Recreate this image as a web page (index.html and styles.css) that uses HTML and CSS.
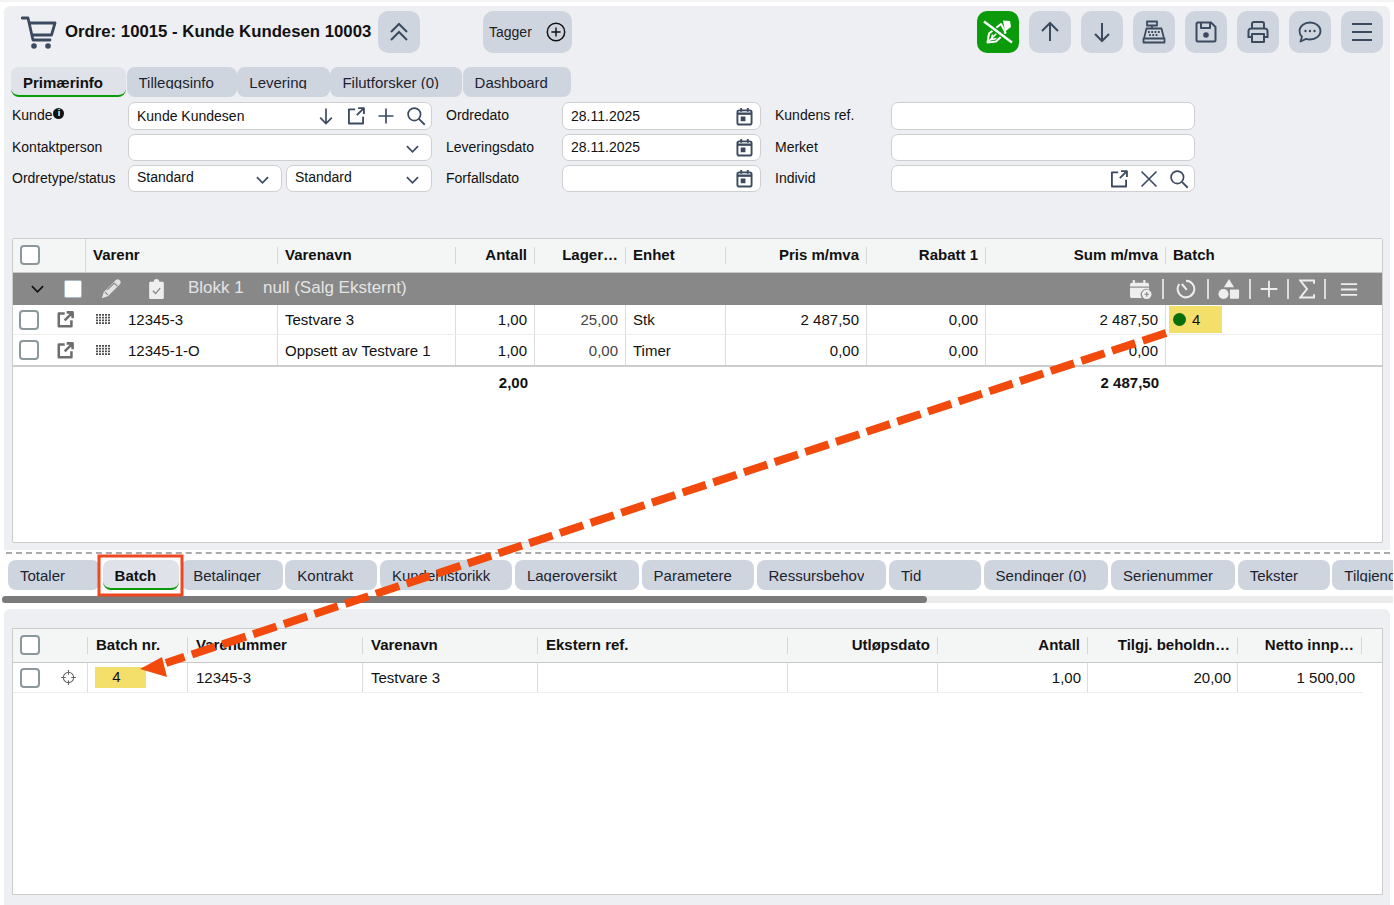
FILE: index.html
```html
<!DOCTYPE html>
<html lang="no">
<head>
<meta charset="utf-8">
<title>Ordre 10015</title>
<link rel="stylesheet" href="styles.css">
</head>
<body>
<svg class="sprite" width="0" height="0" aria-hidden="true">
  <symbol id="i-open" viewBox="0 0 24 24"><path d="M11 4H3.500v17h17v-8M13 11 21.500 2.500M14.500 2.500h7v7" fill="none" stroke="currentColor" stroke-width="2.200" stroke-linejoin="round"/></symbol>
  <symbol id="i-open-bold" viewBox="0 0 24 24"><path d="M11 4.500H3.500v16h16V13M11 13 20.500 3.500M13.500 3h7.500v7.500" fill="none" stroke="currentColor" stroke-width="3.200" stroke-linejoin="round"/></symbol>
  <symbol id="i-search" viewBox="0 0 24 24"><circle cx="10" cy="10" r="7.500" fill="none" stroke="currentColor" stroke-width="2"/><path d="m15.500 15.500 7 7" stroke="currentColor" stroke-width="2.200"/></symbol>
  <symbol id="i-plus" viewBox="0 0 24 24"><path d="M12 3v18M3 12h18" stroke="currentColor" stroke-width="2"/></symbol>
  <symbol id="i-x" viewBox="0 0 24 24"><path d="m3 3 18 18M21 3 3 21" stroke="currentColor" stroke-width="2"/></symbol>
  <symbol id="i-down" viewBox="0 0 24 24"><path d="M12 3v18M5 14l7 7 7-7" fill="none" stroke="currentColor" stroke-width="2"/></symbol>
  <symbol id="i-up" viewBox="0 0 24 24"><path d="M12 21V3M4 11l8-8 8 8" fill="none" stroke="currentColor" stroke-width="2"/></symbol>
  <symbol id="i-chev" viewBox="0 0 14 8"><path d="m1 1 6 6 6-6" fill="none" stroke="currentColor" stroke-width="1.800"/></symbol>
  <symbol id="i-cal" viewBox="0 0 18 20"><rect x="1.500" y="3.500" width="15" height="15" rx="2" fill="none" stroke="currentColor" stroke-width="2"/><path d="M1.500 7h15" stroke="currentColor" stroke-width="2.500"/><path d="M5.500 1v4M12.500 1v4" stroke="currentColor" stroke-width="2"/><rect x="5" y="10" width="5" height="5" fill="currentColor"/></symbol>
  <symbol id="i-dots" viewBox="0 0 14 11"><path d="M1 0v11M4 0v11M7 0v11M10 0v11M13 0v11" stroke="#222" stroke-width="1.600" stroke-dasharray="1.800 .95"/></symbol>
</svg>

<main class="order-panel">
  <header class="order-head">
    <svg class="cart" viewBox="0 0 36 34" width="36" height="34"><path d="M1 2h6l5 22h17M9 7h25l-3.500 12H11" fill="none" stroke="#3b4a5f" stroke-width="2.800" stroke-linejoin="round" stroke-linecap="round"/><circle cx="13" cy="30" r="2.800" fill="#3b4a5f"/><circle cx="27" cy="30" r="2.800" fill="#3b4a5f"/></svg>
    <h1 class="order-title">Ordre: 10015 - Kunde Kundesen 10003</h1>
    <button class="tool collapse"><svg viewBox="0 0 24 24" width="24" height="24"><path d="m4 12 8-8 8 8M4 20l8-8 8 8" fill="none" stroke="#3b4a5f" stroke-width="2"/></svg></button>
    <button class="tags">Tagger<svg viewBox="0 0 24 24" width="22" height="22"><circle cx="12" cy="12" r="9.500" fill="none" stroke="#111" stroke-width="1.600"/><path d="M12 7v10M7 12h10" stroke="#111" stroke-width="1.600"/></svg></button>
    <div class="tools">
      <button class="tool green"><svg viewBox="0 0 42 42" width="42" height="42"><path d="M26 9.500l7 .5 1 6-6 4.500z" fill="#fff"/><path d="M24 13l4.500 8.500L19 30.500l-8.500 1 1.500-9z" fill="none" stroke="#fff" stroke-width="2" stroke-linejoin="round"/><path d="M12 30l8-8M15.500 23.500l-1 5 5-1" fill="none" stroke="#fff" stroke-width="1.500"/><path d="M7 10.500 35 31.500" stroke="#0a9a0a" stroke-width="5"/><path d="M7 10.500 35 31.500" stroke="#fff" stroke-width="2.400"/></svg></button>
      <button class="tool"><svg class="ic" width="24" height="24"><use href="#i-up"/></svg></button>
      <button class="tool"><svg class="ic" width="24" height="24"><use href="#i-down"/></svg></button>
      <button class="tool"><svg class="ic" viewBox="0 0 24 24" width="24" height="24"><path d="M5 1.500h10v4H5zM10 5.500v3M4.500 8.500h15l2.500 10H2zM1.500 18.500h21v4h-21z" fill="none" stroke="currentColor" stroke-width="1.800" stroke-linejoin="round"/><path d="M6 12h12M7 15h10" stroke="currentColor" stroke-width="1.800" stroke-dasharray="1.800 1.500"/></svg></button>
      <button class="tool"><svg class="ic" viewBox="0 0 24 24" width="24" height="24"><path d="M4 2.500h13l4.500 4.500v13a1.500 1.500 0 0 1-1.500 1.500H4A1.500 1.500 0 0 1 2.500 20V4A1.500 1.500 0 0 1 4 2.500zM7 2.500v5.500h9V2.500" fill="none" stroke="currentColor" stroke-width="2" stroke-linejoin="round"/><circle cx="12" cy="15" r="2.800" fill="currentColor"/></svg></button>
      <button class="tool"><svg class="ic" viewBox="0 0 24 24" width="24" height="24"><path d="M6 9V4a2 2 0 0 1 2-2h8a2 2 0 0 1 2 2v5M6 17H2.500v-6A2.500 2.500 0 0 1 5 8.500h14a2.500 2.500 0 0 1 2.500 2.500v6H18" fill="none" stroke="currentColor" stroke-width="2"/><path d="M6 14h12v8H6z" fill="none" stroke="currentColor" stroke-width="2" stroke-linejoin="round"/></svg></button>
      <button class="tool"><svg class="ic" viewBox="0 0 24 24" width="24" height="24"><path d="M12 2.500c5.800 0 10.500 3.700 10.500 8.500S17.800 19.500 12 19.500c-1.400 0-2.700-.2-3.900-.6L2.500 21.500l1.500-4.700C2.200 15.300 1.500 13.300 1.500 11c0-4.800 4.700-8.500 10.500-8.500z" fill="none" stroke="currentColor" stroke-width="1.800" stroke-linejoin="round"/><circle cx="7.500" cy="11" r="1.200" fill="currentColor"/><circle cx="12" cy="11" r="1.200" fill="currentColor"/><circle cx="16.500" cy="11" r="1.200" fill="currentColor"/></svg></button>
      <button class="tool"><svg class="ic" viewBox="0 0 24 24" width="24" height="24"><path d="M2 4h20M2 12h20M2 20h20" stroke="currentColor" stroke-width="2.200"/></svg></button>
    </div>
  </header>

  <nav class="tabs top-tabs">
    <span class="tab active"><span class="tab-label">Primærinfo</span></span>
    <span class="tab"><span class="tab-label">Tilleggsinfo</span></span>
    <span class="tab"><span class="tab-label">Levering</span></span>
    <span class="tab"><span class="tab-label">Filutforsker (0)</span></span>
    <span class="tab"><span class="tab-label">Dashboard</span></span>
  </nav>

  <section class="form">
    <label class="lbl">Kunde<span class="info">i</span></label>
    <div class="field"><span class="val">Kunde Kundesen</span>
      <svg class="f-ic" width="20" height="20"><use href="#i-down"/></svg>
      <svg class="f-ic" width="20" height="20"><use href="#i-open"/></svg>
      <svg class="f-ic" width="20" height="20"><use href="#i-plus"/></svg>
      <svg class="f-ic" width="20" height="20"><use href="#i-search"/></svg>
    </div>
    <label class="lbl lbl-wide">Ordredato</label>
    <div class="field"><span class="val">28.11.2025</span><svg class="f-cal" width="17" height="19"><use href="#i-cal"/></svg></div>
    <label class="lbl lbl-wide">Kundens ref.</label>
    <div class="field"></div>

    <label class="lbl">Kontaktperson</label>
    <div class="field"><span class="val"></span><svg class="f-chev" width="13" height="8"><use href="#i-chev"/></svg></div>
    <label class="lbl lbl-wide">Leveringsdato</label>
    <div class="field"><span class="val">28.11.2025</span><svg class="f-cal" width="17" height="19"><use href="#i-cal"/></svg></div>
    <label class="lbl lbl-wide">Merket</label>
    <div class="field"></div>

    <label class="lbl">Ordretype/status</label>
    <div class="field-pair">
      <div class="field"><span class="val raised">Standard</span><svg class="f-chev" width="13" height="8"><use href="#i-chev"/></svg></div>
      <div class="field"><span class="val raised">Standard</span><svg class="f-chev" width="13" height="8"><use href="#i-chev"/></svg></div>
    </div>
    <label class="lbl lbl-wide">Forfallsdato</label>
    <div class="field"><span class="val"></span><svg class="f-cal" width="17" height="19"><use href="#i-cal"/></svg></div>
    <label class="lbl lbl-wide">Individ</label>
    <div class="field"><span class="val"></span>
      <svg class="f-ic" width="20" height="20"><use href="#i-open"/></svg>
      <svg class="f-ic" width="20" height="20"><use href="#i-x"/></svg>
      <svg class="f-ic" width="20" height="20"><use href="#i-search"/></svg>
    </div>
  </section>

  <section class="grid-box lines-box">
    <div class="lines-row head">
      <div class="cell first-head"><span class="cb"></span></div>
      <div class="cell sep">Varenr</div>
      <div class="cell sep">Varenavn</div>
      <div class="cell sep r">Antall</div>
      <div class="cell sep r">Lager…</div>
      <div class="cell sep">Enhet</div>
      <div class="cell sep r">Pris m/mva</div>
      <div class="cell sep r">Rabatt 1</div>
      <div class="cell sep r">Sum m/mva</div>
      <div class="cell">Batch</div>
    </div>
    <div class="block-row">
      <svg class="b-chev" width="13" height="8"><use href="#i-chev"/></svg>
      <span class="b-check"></span>
      <svg class="b-pencil" viewBox="0 0 24 24" width="22" height="22"><path d="M17 2.500a3 3 0 0 1 4.500 4.500L8.500 20 2 22l2-6.500z" fill="#e2e2e2"/><path d="M15 5l4 4M5.500 15.500l3 3M8 13l7-7" stroke="#888" stroke-width="1.200"/></svg>
      <svg class="b-clip" viewBox="0 0 18 24" width="17" height="22"><path d="M2.500 4H6a3 3 0 0 1 6 0h3.500A1.500 1.500 0 0 1 17 5.500v16a1.500 1.500 0 0 1-1.500 1.500h-13A1.500 1.500 0 0 1 1 21.500v-16A1.500 1.500 0 0 1 2.500 4z" fill="#eee"/><path d="m5 14 3 3 5-6" fill="none" stroke="#888" stroke-width="1.500"/></svg>
      <span class="b-name">Blokk 1</span>
      <span class="b-sub">null (Salg Eksternt)</span>
      <div class="b-tools">
        <span class="b-tool w-cal"><svg viewBox="0 0 24 22" width="23" height="21"><path d="M3 4h16a2 2 0 0 1 2 2v5a6 6 0 0 0-7.500 9H3a2 2 0 0 1-2-2V6a2 2 0 0 1 2-2z" fill="#eee"/><path d="M5 1v5M16 1v5" stroke="#eee" stroke-width="2.200"/><path d="M1 8.500h20" stroke="#888" stroke-width="1.200"/><circle cx="18.500" cy="16" r="5" fill="#eee"/><path d="M18.500 13.500v5M16 16h5" stroke="#888" stroke-width="1.200"/></svg></span>
        <span class="b-tool w-clock"><svg viewBox="0 0 24 24" width="20" height="20"><path d="M12 2a10 10 0 1 1-8 4" fill="none" stroke="#eee" stroke-width="2.400"/><path d="M7 6l6 7" stroke="#eee" stroke-width="2.400"/></svg></span>
        <span class="b-tool w-shapes"><svg viewBox="0 0 24 24" width="22" height="22"><path d="M12 1l5.500 9h-11z" fill="#eee"/><circle cx="6" cy="17.500" r="5.500" fill="#eee"/><rect x="13" y="12.500" width="10" height="10" rx="1" fill="#eee"/></svg></span>
        <span class="b-tool w-plus"><svg viewBox="0 0 24 24" width="20" height="20"><path d="M12 2v20M2 12h20" stroke="#eee" stroke-width="2.200"/></svg></span>
        <span class="b-tool w-sum"><svg viewBox="0 0 18 22" width="16" height="20"><path d="M17 5V1.500H1.500L9 11 1.500 20.500H17V17" fill="none" stroke="#eee" stroke-width="2.200"/></svg></span>
        <span class="b-tool w-menu"><svg viewBox="0 0 20 16" width="18" height="15"><path d="M1 2h18M1 8h18M1 14h18" stroke="#eee" stroke-width="2"/></svg></span>
      </div>
    </div>
    <div class="lines-row body">
      <div class="cell span2"><span class="cb"></span><svg class="open-ic" width="19" height="19"><use href="#i-open-bold"/></svg><svg class="dots" width="14" height="11"><use href="#i-dots"/></svg><span>12345-3</span></div>
      <div class="cell bl">Testvare 3</div>
      <div class="cell bl r">1,00</div>
      <div class="cell bl r muted">25,00</div>
      <div class="cell bl">Stk</div>
      <div class="cell bl r">2 487,50</div>
      <div class="cell bl r">0,00</div>
      <div class="cell bl r">2 487,50</div>
      <div class="cell bl batch-cell"><span class="batch-tag"><i class="dot"></i>4</span></div>
    </div>
    <div class="lines-row body last">
      <div class="cell span2"><span class="cb"></span><svg class="open-ic" width="19" height="19"><use href="#i-open-bold"/></svg><svg class="dots" width="14" height="11"><use href="#i-dots"/></svg><span>12345-1-O</span></div>
      <div class="cell bl">Oppsett av Testvare 1</div>
      <div class="cell bl r">1,00</div>
      <div class="cell bl r muted">0,00</div>
      <div class="cell bl">Timer</div>
      <div class="cell bl r">0,00</div>
      <div class="cell bl r">0,00</div>
      <div class="cell bl r">0,00</div>
      <div class="cell bl"></div>
    </div>
    <div class="lines-row total">
      <div class="cell span2"></div>
      <div class="cell"></div>
      <div class="cell r">2,00</div>
      <div class="cell"></div>
      <div class="cell"></div>
      <div class="cell"></div>
      <div class="cell"></div>
      <div class="cell r">2 487,50</div>
      <div class="cell"></div>
    </div>
  </section>
</main>

<div class="divider"></div>

<nav class="tabs bottom-tabs">
  <span class="tab"><span class="tab-label">Totaler</span></span>
  <span class="tab active narrow"><span class="tab-label">Batch</span></span>
  <span class="tab"><span class="tab-label">Betalinger</span></span>
  <span class="tab"><span class="tab-label">Kontrakt</span></span>
  <span class="tab"><span class="tab-label">Kundehistorikk</span></span>
  <span class="tab"><span class="tab-label">Lageroversikt</span></span>
  <span class="tab"><span class="tab-label">Parametere</span></span>
  <span class="tab"><span class="tab-label">Ressursbehov</span></span>
  <span class="tab"><span class="tab-label">Tid</span></span>
  <span class="tab"><span class="tab-label">Sendinger (0)</span></span>
  <span class="tab"><span class="tab-label">Serienummer</span></span>
  <span class="tab"><span class="tab-label">Tekster</span></span>
  <span class="tab"><span class="tab-label">Tilgjengelighet</span></span>
</nav>
<div class="scroll-track"><div class="scroll-thumb"></div></div>

<section class="batch-panel">
  <div class="grid-box batch-box">
    <div class="batch-row head">
      <div class="cell sep"><span class="cb"></span></div>
      <div class="cell sep">Batch nr.</div>
      <div class="cell sep">Varenummer</div>
      <div class="cell sep">Varenavn</div>
      <div class="cell sep">Ekstern ref.</div>
      <div class="cell sep r">Utløpsdato</div>
      <div class="cell sep r">Antall</div>
      <div class="cell sep r">Tilgj. beholdn…</div>
      <div class="cell sep r">Netto innp…</div>
    </div>
    <div class="batch-row body">
      <div class="cell"><span class="cb"></span><svg class="target" viewBox="0 0 16 16" width="15" height="15"><circle cx="8" cy="8" r="5.500" fill="none" stroke="#666" stroke-width="1.100"/><path d="M8 0v5M8 11v5M0 8h5M11 8h5" stroke="#666" stroke-width="1.100"/></svg></div>
      <div class="cell bl"><span class="batch-no">4</span></div>
      <div class="cell bl">12345-3</div>
      <div class="cell bl">Testvare 3</div>
      <div class="cell bl"></div>
      <div class="cell bl"></div>
      <div class="cell bl r">1,00</div>
      <div class="cell bl r">20,00</div>
      <div class="cell bl r">1 500,00</div>
    </div>
  </div>
</section>

<svg class="callout" viewBox="0 0 1394 905" width="1394" height="905" aria-hidden="true">
  <rect x="99" y="556" width="83" height="39" fill="none" stroke="#ee4722" stroke-width="3"/>
  <path d="M1166 333 166 663" fill="none" stroke="#f24a0c" stroke-width="8" stroke-dasharray="24.500 7.800"/>
  <path d="M140 669 162 657 167 677z" fill="#f24a0c"/>
</svg>
</body>
</html>
```
FILE: styles.css
```css
* { box-sizing: border-box; }
html, body { margin: 0; padding: 0; }
body {
  position: relative;
  width: 1394px;
  height: 905px;
  overflow: hidden;
  background: #fff;
  border-top: 2px solid #f4f4f4;
  font-family: "Liberation Sans", Arial, sans-serif;
  font-size: 14px;
  color: #111;
}
.sprite { position: absolute; }

.order-panel {
  margin: 4px 4px 0;
  height: 544px;
  padding: 5px 7px 0 8px;
  background: #eeeff3;
  border-radius: 6px 6px 0 0;
}
.order-head { display: flex; align-items: flex-start; height: 42px; }
.cart { margin: 5px 8px 0 9px; flex: none; }
.order-title {
  margin: 0;
  width: 313px;
  font-size: 16.750px;
  font-weight: 700;
  line-height: 42px;
  white-space: nowrap;
}
.tool {
  flex: none;
  width: 42px;
  height: 42px;
  padding: 0;
  border: 0;
  border-radius: 10px;
  background: #cfd5df;
  color: #3b4a5f;
  display: flex;
  align-items: center;
  justify-content: center;
}
.tool.green { background: #0a9a0a; }
.tags {
  margin-left: 63px;
  width: 89px;
  height: 42px;
  padding: 0 5px 0 6px;
  border: 0;
  border-radius: 10px;
  background: #cfd5df;
  display: flex;
  align-items: center;
  justify-content: space-between;
  font: 14px "Liberation Sans", Arial, sans-serif;
  color: #222;
}
.tools { margin-left: auto; display: flex; gap: 10px; }

.tabs { display: flex; }
.tab {
  flex: none;
  min-width: 92px;
  height: 30px;
  padding: 8px 22px 0 12px;
  background: #cfd5df;
  border-radius: 8px;
  font-size: 15px;
  line-height: 16px;
  white-space: nowrap;
  color: #1c2430;
}
.tab-label { display: block; height: 14px; overflow: hidden; }
.tab.active {
  background: #dfe2e8;
  font-weight: 700;
  color: #111;
  border-bottom: 2px solid #0a9a0a;
}
.top-tabs { margin: 14px 0 0 -1px; gap: .5px; }
.top-tabs .tab { padding-right: 23px; }
.bottom-tabs { margin: 6px 1px 0 8px; gap: 2.600px; height: 30px; overflow: hidden; }
.tab.narrow { min-width: 76px; }

.form {
  display: grid;
  grid-template-columns: 116px 304px 130px 199px 130px 304px;
  grid-template-rows: 28px 27px 27px;
  row-gap: 4px;
  margin-top: 5px;
  align-items: center;
}
.lbl { font-size: 14px; white-space: nowrap; margin-bottom: 2px; }
.lbl-wide { padding-left: 14px; }
.info {
  display: inline-block;
  width: 11px;
  height: 11px;
  margin: 0 0 4px 1px;
  border-radius: 50%;
  background: #111;
  color: #fff;
  font-size: 9px;
  font-weight: 700;
  line-height: 11px;
  text-align: center;
  vertical-align: middle;
}
.field {
  display: flex;
  align-items: center;
  height: 100%;
  min-width: 0;
  padding: 0 5px 0 8px;
  gap: 10px;
  background: #fff;
  border: 1px solid #cfcfd2;
  border-radius: 7px;
  color: #3b4a5f;
}
.val { flex: 1; color: #111; font-size: 14px; white-space: nowrap; margin-bottom: 1px; }
.val.raised { margin: 0 0 4px; }
.f-chev { flex: none; margin: 3px 7px 0 0; }
.f-cal { flex: none; margin-right: 2px; }
.f-ic { flex: none; }
.field-pair { display: grid; grid-template-columns: 154px 146px; gap: 4px; height: 100%; }

.grid-box { background: #fff; border: 1px solid #ccc; font-size: 15px; }
.lines-box { width: 1371px; height: 305px; margin-top: 46px; border-radius: 2px; }
.lines-row, .batch-row { display: grid; }
.lines-row { grid-template-columns: 73px 192px 178px 79px 91px 100px 141px 119px 180px 214px; }
.batch-row { grid-template-columns: 75px 100px 175px 175px 250px 150px 150px 150px 124px; }
.head {
  height: 34px;
  background: #f4f5f5;
  border-bottom: 1px solid #c9c9c9;
  font-weight: 700;
}
.cell {
  display: flex;
  align-items: center;
  min-width: 0;
  padding: 0 7px;
  white-space: nowrap;
  overflow: hidden;
}
.head .cell { position: relative; padding-bottom: 2px; }
.first-head { border-right: 1px solid #d6d6d6; }
.sep::after {
  content: "";
  position: absolute;
  right: 0;
  top: 8px;
  bottom: 8px;
  width: 1px;
  background: #d6d6d6;
}
.r { justify-content: flex-end; text-align: right; }
.lines-row .r, .batch-row.head .r { padding-right: 8px; }
.lines-row.total .r { padding-right: 7px; }
.batch-row .cell:not(:first-child) { padding-left: 8px; }
.body { height: 30px; border-bottom: 1px solid #eee; background: #fff; }
.body.last { border-bottom: 2px solid #ccc; height: 32px; }
.bl { border-left: 1px solid #ddd; margin-left: -1px; }
.span2 { grid-column: span 2; padding-left: 6px; }
.total { height: 30px; font-weight: 700; }
.muted { color: #444; }

.cb {
  flex: none;
  width: 20px;
  height: 20px;
  background: #fff;
  border: 2px solid #8c979c;
  border-radius: 4px;
}
.open-ic { flex: none; margin-left: 17px; color: #6d6d6d; }
.dots { flex: none; margin: 0 18px 0 21px; }
.batch-cell { padding: 0 0 0 3px; align-items: flex-start; overflow: visible; }
.batch-tag {
  display: flex;
  align-items: center;
  width: 53px;
  height: 27px;
  margin-top: 1px;
  padding-left: 4px;
  background: #f5df6b;
}
.dot {
  width: 13px;
  height: 13px;
  margin-right: 6px;
  border-radius: 50%;
  background: #0a6e0a;
}

.block-row {
  display: flex;
  align-items: center;
  height: 32px;
  padding-left: 18px;
  background: #888;
  color: #e4e4e4;
  font-size: 17px;
}
.b-chev { flex: none; color: #111; }
.b-check {
  flex: none;
  width: 18px;
  height: 18px;
  margin-left: 20px;
  background: #fff;
  border: 1px solid #a9bbc9;
  border-radius: 2px;
}
.b-pencil { flex: none; margin-left: 18px; }
.b-clip { flex: none; margin-left: 26px; }
.b-name { margin: -2px 0 0 23px; width: 75px; }
.b-sub { margin-top: -2px; }
.b-tools { margin-left: auto; display: flex; align-items: center; padding-right: 10px; }
.b-tool {
  display: flex;
  align-items: center;
  justify-content: center;
  height: 20px;
  border-right: 2px solid #ddd;
}
.b-tool.w-cal { width: 45px; }
.b-tool.w-clock { width: 45px; }
.b-tool.w-shapes { width: 42px; }
.b-tool.w-plus { width: 38px; }
.b-tool.w-sum { width: 37px; }
.b-tool.w-menu { width: 46px; border-right: 0; }

.divider {
  margin: 2px 4px 0 6px;
  border-top: 2px dashed #aaa;
}
.scroll-track { height: 7px; margin: 6px 1px 0 2px; background: #ececec; }
.scroll-thumb { width: 925px; height: 7px; background: #7a7a7a; border-radius: 4px; }

.batch-panel {
  height: 296px;
  margin: 6px 4px 0;
  padding: 19px 7px 0 8px;
  background: #eeeff3;
  border-radius: 6px 6px 0 0;
}
.batch-box { width: 1371px; height: 267px; }
.batch-row.body { width: 1350px; }
.target { flex: none; margin-left: 21px; }
.batch-no {
  display: block;
  width: 51px;
  height: 21px;
  margin-left: -1px;
  padding-right: 8px;
  background: #f5df6b;
  text-align: center;
  line-height: 20px;
}

.callout { position: absolute; left: 0; top: -2px; pointer-events: none; }
```
